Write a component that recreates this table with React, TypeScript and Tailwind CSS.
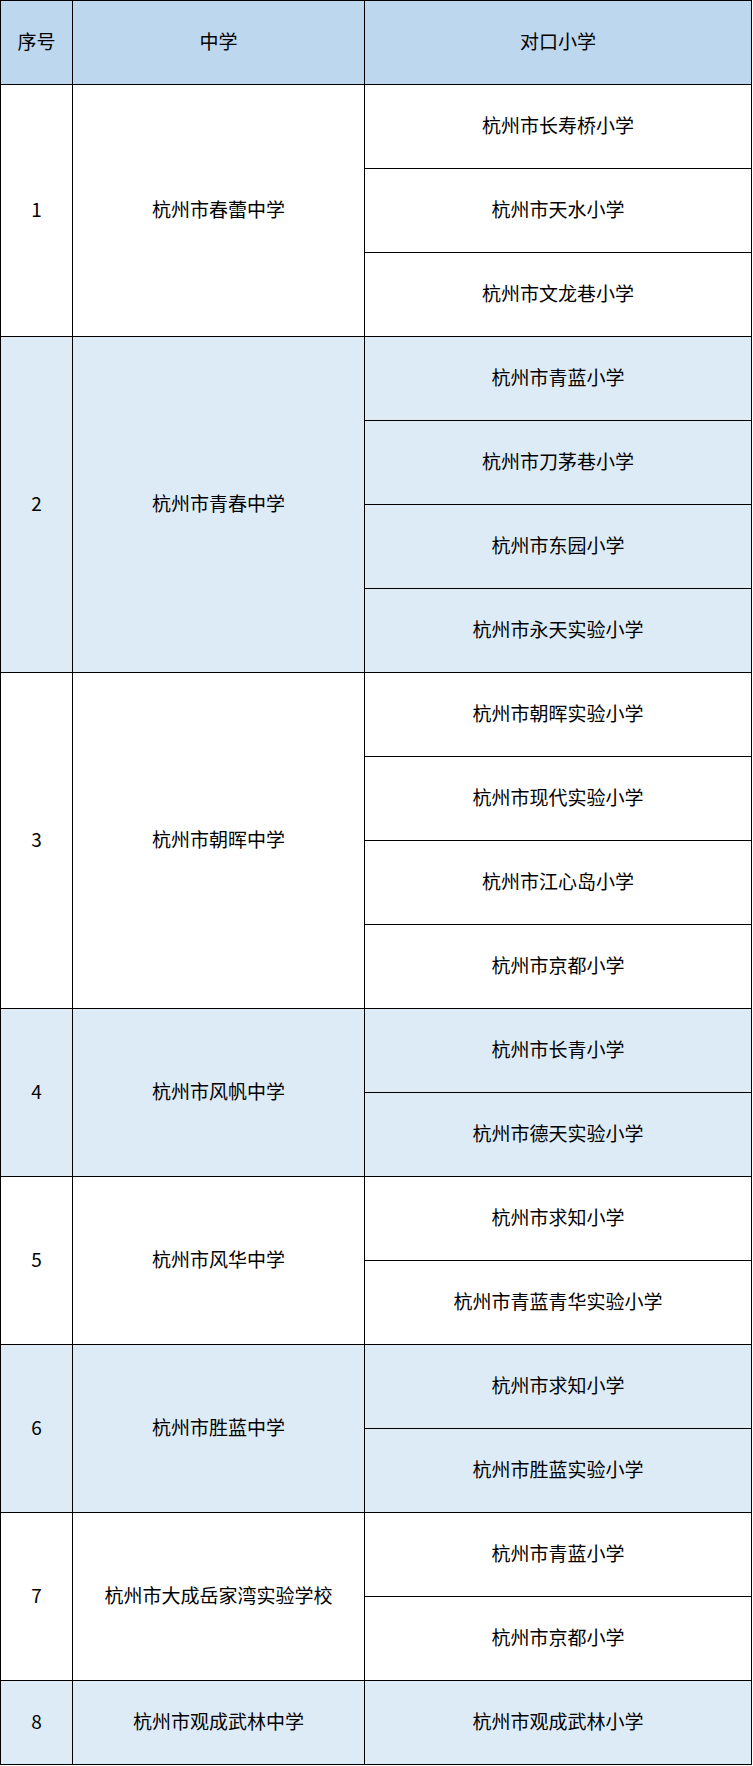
const groups = [
  { school: '杭州市春蕾中学', primaries: ['杭州市长寿桥小学', '杭州市天水小学', '杭州市文龙巷小学'] },
  { school: '杭州市青春中学', primaries: ['杭州市青蓝小学', '杭州市刀茅巷小学', '杭州市东园小学', '杭州市永天实验小学'] },
  { school: '杭州市朝晖中学', primaries: ['杭州市朝晖实验小学', '杭州市现代实验小学', '杭州市江心岛小学', '杭州市京都小学'] },
  { school: '杭州市风帆中学', primaries: ['杭州市长青小学', '杭州市德天实验小学'] },
  { school: '杭州市风华中学', primaries: ['杭州市求知小学', '杭州市青蓝青华实验小学'] },
  { school: '杭州市胜蓝中学', primaries: ['杭州市求知小学', '杭州市胜蓝实验小学'] },
  { school: '杭州市大成岳家湾实验学校', primaries: ['杭州市青蓝小学', '杭州市京都小学'] },
  { school: '杭州市观成武林中学', primaries: ['杭州市观成武林小学'] },
];

const cell = 'border border-black text-center align-middle px-0 pt-0 pb-[3px]';

export default function App() {
  return (
    <div className="w-[753px] bg-white font-['Noto_Sans_CJK_SC','Noto_Sans',sans-serif] text-[19px] text-black">
      <table className="w-[752px] border-collapse table-fixed">
        <colgroup>
          <col className="w-[72px]" />
          <col className="w-[292px]" />
          <col />
        </colgroup>
        <thead>
          <tr className="h-[84px] bg-[#bdd7ee]">
            <th className={`${cell} font-normal`}>序号</th>
            <th className={`${cell} font-normal`}>中学</th>
            <th className={`${cell} font-normal`}>对口小学</th>
          </tr>
        </thead>
        <tbody>
          {groups.map((g, gi) => {
            const bg = gi % 2 === 1 ? 'bg-[#ddebf7]' : 'bg-white';
            return g.primaries.map((p, pi) => (
              <tr key={`${gi}-${pi}`} className={`h-[84px] ${bg}`}>
                {pi === 0 && (
                  <>
                    <td rowSpan={g.primaries.length} className={cell}>
                      {gi + 1}
                    </td>
                    <td rowSpan={g.primaries.length} className={cell}>
                      {g.school}
                    </td>
                  </>
                )}
                <td className={cell}>{p}</td>
              </tr>
            ));
          })}
        </tbody>
      </table>
    </div>
  );
}
